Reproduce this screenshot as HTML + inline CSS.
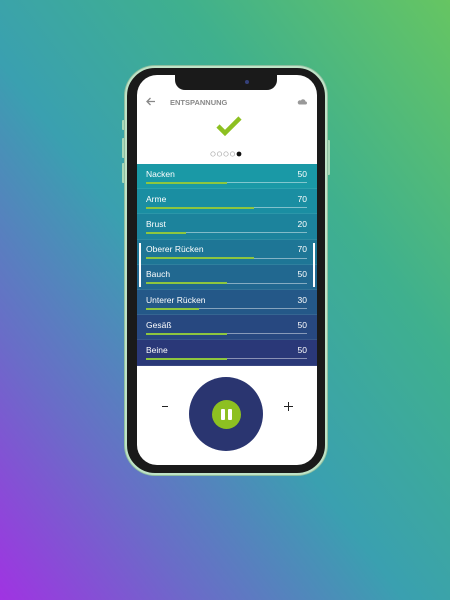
<!DOCTYPE html>
<html><head><meta charset="utf-8"><style>
*{margin:0;padding:0;box-sizing:border-box}
body{width:450px;height:600px;overflow:hidden;position:relative;font-family:"Liberation Sans",sans-serif;
background:linear-gradient(to bottom left,#66c562 0%,#3fb08e 30%,#3aa0b0 55%,#6a6cc8 78%,#a033e2 100%);}
.frame{position:absolute;left:125px;top:66px;width:202px;height:409px;border-radius:30px;background:#1a1a1a;border:2px solid #bfe3c7;box-shadow:0 0 0 1px #8fbfa0}
.btn{position:absolute;background:#a8d8b8;width:3px;border-radius:1px}
.screen{position:absolute;left:137px;top:75px;width:180px;height:390px;border-radius:20px;background:#fff;overflow:hidden}
.notch{position:absolute;left:38px;top:0;width:102px;height:15px;background:#1a1a1a;border-radius:0 0 10px 10px}
.title{position:absolute;left:33px;top:23px;font-size:7.5px;font-weight:bold;color:#888}
.row{position:absolute;left:0;width:180px;height:25.2px;border-bottom:1px solid rgba(255,255,255,0.08)}
.lab{position:absolute;left:9px;top:4.5px;font-size:8.5px;color:#fff}
.val{position:absolute;right:10px;top:4.5px;font-size:8.5px;color:#fff}
.bar{position:absolute;left:9px;right:10px;top:18px;height:1px;background:rgba(255,255,255,0.45)}
.bar i{position:absolute;left:0;top:-0.5px;height:2px;background:#8dc63f}
</style></head><body>
<div class="btn" style="left:122px;top:120px;height:10px"></div>
<div class="btn" style="left:122px;top:138px;height:20px"></div>
<div class="btn" style="left:122px;top:163px;height:20px"></div>
<div class="btn" style="left:327px;top:140px;height:35px"></div>
<div class="frame"></div>
<div class="screen">
<div class="notch"><div style="position:absolute;left:70px;top:5px;width:4px;height:4px;border-radius:50%;background:#35407a"></div></div>
<svg style="position:absolute;left:9px;top:22px" width="10" height="9" viewBox="0 0 10 9"><path d="M9 4.5H1.5M4.5 1L1 4.5 4.5 8" stroke="#888" stroke-width="1.3" fill="none"/></svg>
<div class="title">ENTSPANNUNG</div>
<svg style="position:absolute;left:160px;top:23px" width="10" height="7" viewBox="0 0 10 7"><path d="M2 6.5h6.5a1.5 1.5 0 0 0 0-3 2.5 2.5 0 0 0-4.6-1A2 2 0 0 0 2 6.5z" fill="#999"/></svg>
<svg style="position:absolute;left:78px;top:40px" width="28" height="22" viewBox="0 0 28 22"><path d="M3 11l7 7L25 3" stroke="#8dc021" stroke-width="4.5" fill="none"/></svg>
<svg style="position:absolute;left:73px;top:76px" width="45" height="6" viewBox="0 0 45 6">
<circle cx="3" cy="3" r="2.2" fill="none" stroke="#aaa" stroke-width=".7"/><circle cx="9.5" cy="3" r="2.2" fill="none" stroke="#aaa" stroke-width=".7"/><circle cx="16" cy="3" r="2.2" fill="none" stroke="#aaa" stroke-width=".7"/><circle cx="22.5" cy="3" r="2.2" fill="none" stroke="#aaa" stroke-width=".7"/><circle cx="29" cy="3" r="2.4" fill="#111"/></svg>

<div class="row" style="top:89px;background:#1a99a6"><div class="lab">Nacken</div><div class="val">50</div><div class="bar"><i style="width:50%"></i></div></div>
<div class="row" style="top:114.2px;background:#1a8ea2"><div class="lab">Arme</div><div class="val">70</div><div class="bar"><i style="width:67%"></i></div></div>
<div class="row" style="top:139.4px;background:#1c839c"><div class="lab">Brust</div><div class="val">20</div><div class="bar"><i style="width:25%"></i></div></div>
<div class="row" style="top:164.6px;background:#1e7696"><div class="lab">Oberer Rücken</div><div class="val">70</div><div class="bar"><i style="width:67%"></i></div></div>
<div class="row" style="top:189.8px;background:#216890"><div class="lab">Bauch</div><div class="val">50</div><div class="bar"><i style="width:50%"></i></div></div>
<div class="row" style="top:215px;background:#245888"><div class="lab">Unterer Rücken</div><div class="val">30</div><div class="bar"><i style="width:33%"></i></div></div>
<div class="row" style="top:240.2px;background:#274880"><div class="lab">Gesäß</div><div class="val">50</div><div class="bar"><i style="width:50%"></i></div></div>
<div class="row" style="top:265.4px;background:#2a3878;height:25.6px"><div class="lab">Beine</div><div class="val">50</div><div class="bar"><i style="width:50%"></i></div></div>
<div style="position:absolute;left:2px;top:168px;width:2px;height:44px;background:#fff"></div>
<div style="position:absolute;left:176px;top:168px;width:2px;height:44px;background:#fff"></div>

<div style="position:absolute;left:25px;top:331px;width:6px;height:1.2px;background:#222"></div>
<div style="position:absolute;left:147px;top:331px;width:9px;height:1.2px;background:#222"></div>
<div style="position:absolute;left:150.9px;top:327px;width:1.2px;height:9px;background:#222"></div>
<div style="position:absolute;left:52px;top:302px;width:74px;height:74px;border-radius:50%;background:#2a3570"></div>
<div style="position:absolute;left:75px;top:325px;width:29px;height:29px;border-radius:50%;background:#8dc021"></div>
<div style="position:absolute;left:84px;top:334px;width:4px;height:11px;background:#fff;border-radius:1px"></div>
<div style="position:absolute;left:91px;top:334px;width:4px;height:11px;background:#fff;border-radius:1px"></div>
</div>
</body></html>
